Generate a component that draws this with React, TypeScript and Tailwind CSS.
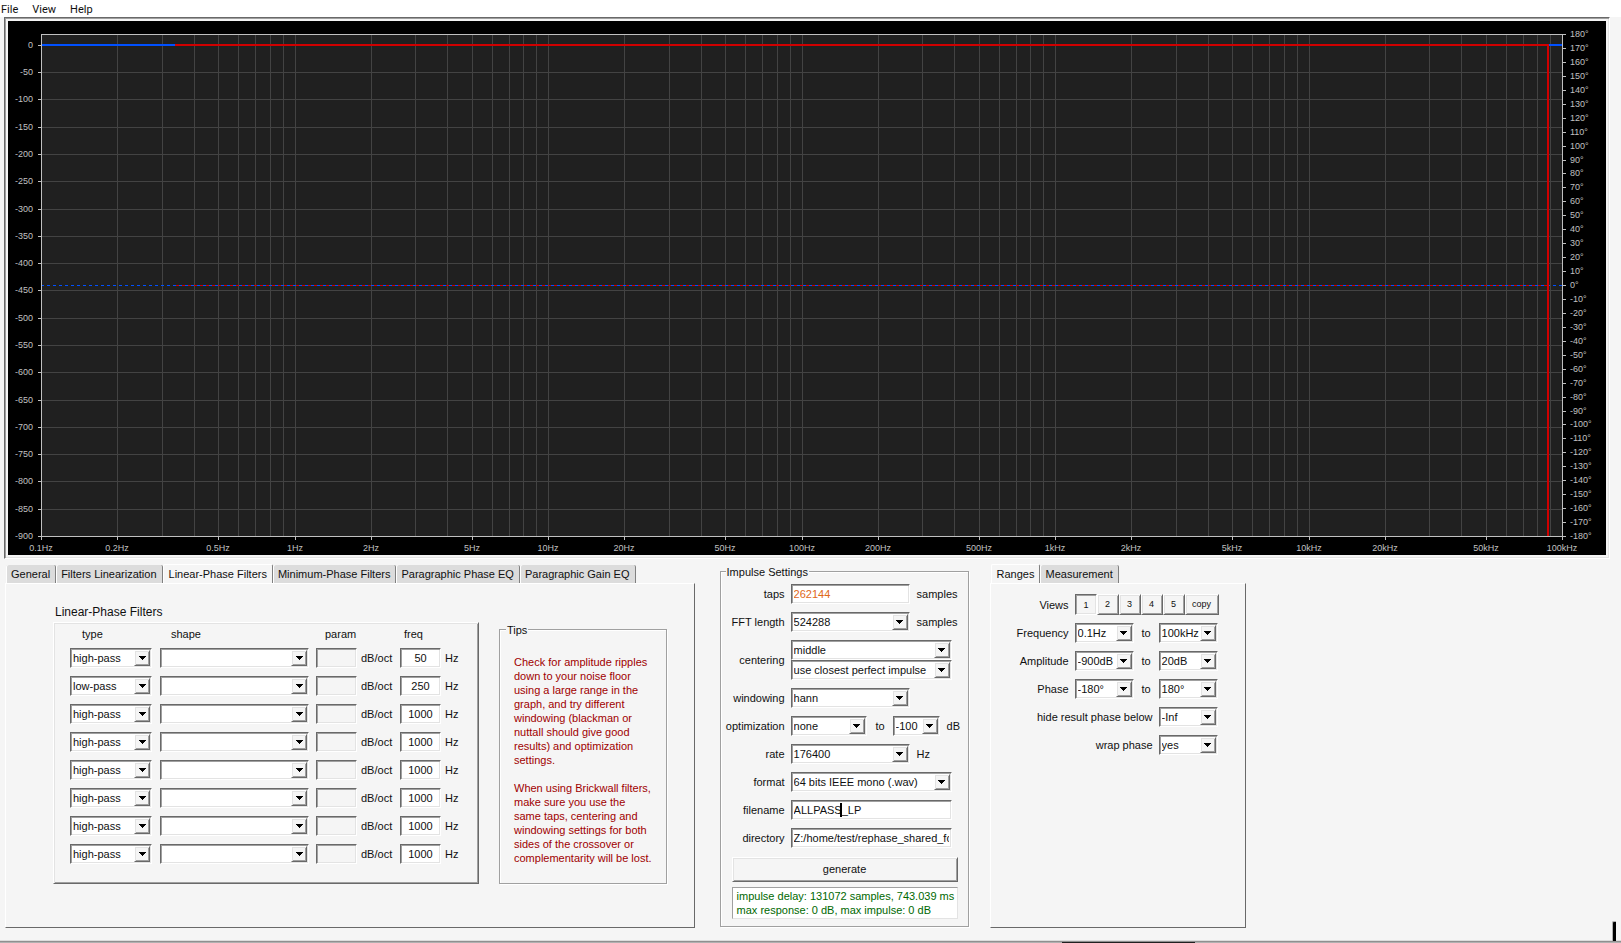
import React, { useState } from "react";

const SUNKEN =
  "border border-t-[#696969] border-l-[#696969] border-r-white border-b-white shadow-[inset_1px_1px_0_#a0a0a0,inset_-1px_-1px_0_#e3e3e3]";
const RAISED =
  "border border-t-white border-l-white border-r-[#696969] border-b-[#696969] shadow-[inset_1px_1px_0_#e3e3e3,inset_-1px_-1px_0_#a0a0a0]";
const GROOVE =
  "border border-[#a0a0a0] shadow-[inset_1px_1px_0_#ffffff,1px_1px_0_#ffffff]";

/* ---------- Response chart ---------- */

const LEFT = 33;
const TOP = 13;
const PLOT_W = 1521;
const PLOT_H = 502;
const RIGHT = LEFT + PLOT_W;
const BOTTOM = TOP + PLOT_H;

const freqX = (hz: number) =>
  Math.round(LEFT + (Math.log10(hz / 0.1) * PLOT_W) / 6);
const gainY = (db: number) => Math.round(TOP + ((20 - db) * PLOT_H) / 920);
const phaseY = (deg: number) => Math.round(TOP + ((180 - deg) * PLOT_H) / 360);

const gains = Array.from({ length: 19 }, (_, i) => -50 * i);
const phases = Array.from({ length: 37 }, (_, i) => 180 - 10 * i);
const gridFreqs = Array.from({ length: 6 }, (_, d) =>
  Array.from({ length: 9 }, (_, m) => (m + 1) * Math.pow(10, d - 1)),
).flat();
const freqTicks: [number, string][] = [
  [0.1, "0.1Hz"],
  [0.2, "0.2Hz"],
  [0.5, "0.5Hz"],
  [1, "1Hz"],
  [2, "2Hz"],
  [5, "5Hz"],
  [10, "10Hz"],
  [20, "20Hz"],
  [50, "50Hz"],
  [100, "100Hz"],
  [200, "200Hz"],
  [500, "500Hz"],
  [1000, "1kHz"],
  [2000, "2kHz"],
  [5000, "5kHz"],
  [10000, "10kHz"],
  [20000, "20kHz"],
  [50000, "50kHz"],
  [100000, "100kHz"],
];

function ResponseChart() {
  const zero = gainY(0);
  const mid = phaseY(0);
  return (
    <svg
      viewBox="0 0 1598 534"
      className="block w-full bg-black text-[9px]"
      role="img"
      aria-label="Amplitude and phase response"
    >
      <g shapeRendering="crispEdges">
        <rect x={LEFT} y={TOP} width={PLOT_W} height={PLOT_H} fill="#202020" />
        <g fill="#434343">
          {gridFreqs.map((f) => (
            <rect key={f} x={freqX(f)} y={TOP} width={1} height={PLOT_H} />
          ))}
          {gains.map((g) => (
            <rect key={g} x={LEFT} y={gainY(g)} width={PLOT_W} height={1} />
          ))}
        </g>
        <path
          d={`M${LEFT} ${mid + 0.5}H${RIGHT}`}
          stroke="#0050ff"
          strokeDasharray="3 3"
        />
        <path
          d={`M168 ${mid + 0.5}H1540`}
          stroke="#d00000"
          strokeDasharray="3 3"
        />
        <rect x={LEFT} y={zero - 1} width={134} height={2} fill="#0050ff" />
        <rect x={1540} y={zero - 1} width={14} height={2} fill="#0050ff" />
        <rect x={167} y={zero - 1} width={1374} height={2} fill="#d00000" />
        <rect
          x={1539}
          y={zero - 1}
          width={2}
          height={BOTTOM - zero + 1}
          fill="#d00000"
        />
        <g fill="#c0c0c0">
          <rect x={LEFT} y={TOP} width={PLOT_W} height={1} />
          <rect x={LEFT} y={BOTTOM} width={PLOT_W} height={1} />
          <rect x={LEFT} y={TOP} width={1} height={PLOT_H} />
          <rect x={RIGHT} y={TOP} width={1} height={PLOT_H} />
          {gains.map((g) => (
            <rect key={g} x={LEFT - 3} y={gainY(g)} width={3} height={1} />
          ))}
          {phases.map((p) => (
            <rect key={p} x={RIGHT} y={phaseY(p)} width={4} height={1} />
          ))}
          {freqTicks.map(([f]) => (
            <rect key={f} x={freqX(f)} y={BOTTOM} width={1} height={4} />
          ))}
        </g>
      </g>
      <g fill="#c0c0c0">
        {gains.map((g) => (
          <text key={g} x={LEFT - 8} y={gainY(g) + 3} textAnchor="end">
            {g}
          </text>
        ))}
        {phases.map((p) => (
          <text key={p} x={RIGHT + 8} y={phaseY(p) + 3}>
            {p}°
          </text>
        ))}
        {freqTicks.map(([f, label]) => (
          <text key={f} x={freqX(f)} y={BOTTOM + 15} textAnchor="middle">
            {label}
          </text>
        ))}
      </g>
    </svg>
  );
}

/* ---------- Controls ---------- */

function Combo({
  id,
  label,
  value,
  options = [],
  className,
}: {
  id?: string;
  label?: string;
  value: string;
  options?: string[];
  className: string;
}) {
  return (
    <span className={`relative block h-5 bg-white ${SUNKEN} ${className}`}>
      <select
        id={id}
        aria-label={label}
        defaultValue={value}
        className="block h-full w-full appearance-none bg-transparent pr-[18px] pl-[2px] outline-none"
      >
        {[value, ...options.filter((o) => o !== value)].map((o) => (
          <option key={o} value={o}>
            {o}
          </option>
        ))}
      </select>
      <span
        className={`pointer-events-none absolute top-px right-px flex h-4 w-4 items-center justify-center bg-[#f5f5f5] ${RAISED}`}
      >
        <svg
          width="7"
          height="4"
          viewBox="0 0 7 4"
          shapeRendering="crispEdges"
          aria-hidden="true"
        >
          <path d="M0 0h7v1h-1v1h-1v1h-1v1h-1v-1h-1v-1h-1v-1h-1z" fill="#000" />
        </svg>
      </span>
    </span>
  );
}

function TextBox({
  id,
  label,
  value,
  className,
}: {
  id?: string;
  label?: string;
  value: string;
  className: string;
}) {
  return (
    <input
      id={id}
      aria-label={label}
      defaultValue={value}
      className={`block h-5 outline-none ${SUNKEN} ${className}`}
    />
  );
}

function Tabs({ names, initial }: { names: string[]; initial: string }) {
  const [active, setActive] = useState(initial);
  return (
    <div role="tablist" className="flex h-[19px] items-end pl-px">
      {names.map((name) => (
        <button
          key={name}
          role="tab"
          aria-selected={name === active}
          onClick={() => setActive(name)}
          className={
            name === active
              ? "h-[19px] rounded-t-[2px] border-t border-r border-l border-t-white border-r-[#808080] border-l-white bg-[#f5f5f5] px-[5px]"
              : "h-[18px] rounded-t-[2px] border-r border-[#808080] bg-[#dcdcdc] px-[5px] shadow-[inset_1px_0_0_#ffffff]"
          }
        >
          {name}
        </button>
      ))}
    </div>
  );
}

const PANEL =
  "border border-t-white border-l-white border-r-[#696969] border-b-[#696969]";

/* ---------- Linear-phase filters ---------- */

const filters = [
  { type: "high-pass", freq: "50" },
  { type: "low-pass", freq: "250" },
  { type: "high-pass", freq: "1000" },
  { type: "high-pass", freq: "1000" },
  { type: "high-pass", freq: "1000" },
  { type: "high-pass", freq: "1000" },
  { type: "high-pass", freq: "1000" },
  { type: "high-pass", freq: "1000" },
];

const FILTER_GRID =
  "grid grid-cols-[90px_156px_45px_39px_45px_33px] items-center";

function FilterPanel() {
  return (
    <section>
      <Tabs
        names={[
          "General",
          "Filters Linearization",
          "Linear-Phase Filters",
          "Minimum-Phase Filters",
          "Paragraphic Phase EQ",
          "Paragraphic Gain EQ",
        ]}
        initial="Linear-Phase Filters"
      />
      <div
        role="tabpanel"
        className={`flex gap-5 pt-5 pr-[27px] pb-[43px] pl-[47px] ${PANEL}`}
      >
        <div>
          <h2 className="mb-[2px] pl-[2px] text-[12px] leading-4">
            Linear-Phase Filters
          </h2>
          <div className={`pt-1 pb-[19px] pl-4 ${RAISED}`}>
            <div className={`mb-[7px] ${FILTER_GRID}`}>
              <span className="pl-3">type</span>
              <span className="pl-[11px]">shape</span>
              <span className="pl-[9px]">param</span>
              <span />
              <span className="pl-1">freq</span>
            </div>
            <div className="flex flex-col gap-2">
              {filters.map((f, i) => (
                <div key={i} className={FILTER_GRID}>
                  <Combo
                    label={`Filter ${i + 1} type`}
                    value={f.type}
                    options={["high-pass", "low-pass"]}
                    className="w-[82px]"
                  />
                  <Combo
                    label={`Filter ${i + 1} shape`}
                    value=""
                    className="w-[149px]"
                  />
                  <TextBox
                    label={`Filter ${i + 1} slope`}
                    value=""
                    className="w-[41px] bg-[#f5f5f5] px-[2px]"
                  />
                  <span>dB/oct</span>
                  <TextBox
                    label={`Filter ${i + 1} frequency`}
                    value={f.freq}
                    className="w-[41px] bg-white text-center"
                  />
                  <span>Hz</span>
                </div>
              ))}
            </div>
          </div>
        </div>
        <fieldset
          className={`mt-[18px] w-[167px] px-[14px] text-[#a00000] ${GROOVE}`}
        >
          <legend className="-ml-2 bg-[#f5f5f5] px-px pt-px text-[#101010]">
            Tips
          </legend>
          <p className="mt-[18px] whitespace-pre">
            {`Check for amplitude ripples
down to your noise floor
using a large range in the
graph, and try different
windowing (blackman or
nuttall should give good
results) and optimization
settings.`}
          </p>
          <p className="mt-[14px] whitespace-pre">
            {`When using Brickwall filters,
make sure you use the
same taps, centering and
windowing settings for both
sides of the crossover or
complementarity will be lost.`}
          </p>
        </fieldset>
      </div>
    </section>
  );
}

/* ---------- Impulse settings ---------- */

function Setting({
  id,
  label,
  children,
}: {
  id: string;
  label: string;
  children: React.ReactNode;
}) {
  return (
    <div className="flex items-center gap-[6px]">
      <label htmlFor={id} className="w-16 shrink-0 text-right">
        {label}
      </label>
      <div className="flex items-center">{children}</div>
    </div>
  );
}

function ImpulseSettings() {
  return (
    <fieldset className={`ml-[25px] w-[249px] self-start ${GROOVE}`}>
      <legend className="ml-[5px] bg-[#f5f5f5] px-px pt-px">
        Impulse Settings
      </legend>
      <div className="flex flex-col gap-2 pt-[5px]">
        <Setting id="taps" label="taps">
          <TextBox
            id="taps"
            value="262144"
            className="w-[119px] bg-white px-[2px] text-[#e06818]"
          />
          <span className="ml-[7px]">samples</span>
        </Setting>
        <Setting id="fft" label="FFT length">
          <Combo id="fft" value="524288" className="w-[119px]" />
          <span className="ml-[7px]">samples</span>
        </Setting>
        <Setting id="centering" label="centering">
          <div>
            <Combo id="centering" value="middle" className="w-[161px]" />
            <Combo
              label="centering precision"
              value="use closest perfect impulse"
              className="w-[161px]"
            />
          </div>
        </Setting>
        <Setting id="windowing" label="windowing">
          <Combo id="windowing" value="hann" className="w-[119px]" />
        </Setting>
        <Setting id="optimization" label="optimization">
          <Combo id="optimization" value="none" className="w-[76px]" />
          <span className="ml-[9px] w-[17px]">to</span>
          <Combo
            label="optimization floor"
            value="-100"
            className="w-[47px]"
          />
          <span className="ml-[7px]">dB</span>
        </Setting>
        <Setting id="rate" label="rate">
          <Combo id="rate" value="176400" className="w-[119px]" />
          <span className="ml-[7px]">Hz</span>
        </Setting>
        <Setting id="format" label="format">
          <Combo
            id="format"
            value="64 bits IEEE mono (.wav)"
            className="w-[161px]"
          />
        </Setting>
        <Setting id="filename" label="filename">
          <div className="relative">
            <TextBox
              id="filename"
              value="ALLPASS_LP"
              className="w-[161px] bg-white px-[2px]"
            />
            <span className="absolute top-[3px] left-[49px] h-[14px] w-[2px] bg-black" />
          </div>
        </Setting>
        <Setting id="directory" label="directory">
          <TextBox
            id="directory"
            value="Z:/home/test/rephase_shared_folder"
            className="w-[161px] bg-white px-[2px]"
          />
        </Setting>
      </div>
      <div className="mt-[9px] mr-[10px] mb-[7px] ml-[11px] flex flex-col gap-[5px]">
        <button className={`h-[25px] pb-[2px] ${RAISED}`}>generate</button>
        <output className="block h-8 border border-t-[#a0a0a0] border-r-[#e3e3e3] border-b-[#e3e3e3] border-l-[#a0a0a0] bg-white pt-px pl-1 whitespace-pre text-[#006800]">
          {`impulse delay: 131072 samples, 743.039 ms
max response: 0 dB, max impulse: 0 dB`}
        </output>
      </div>
    </fieldset>
  );
}

/* ---------- Ranges ---------- */

function RangePair({
  id,
  label,
  from,
  to,
}: {
  id: string;
  label: string;
  from: string;
  to: string;
}) {
  return (
    <div className="flex items-center">
      <label htmlFor={id} className="mr-[6px] w-[78px] text-right">
        {label}
      </label>
      <Combo id={id} value={from} className="w-[59px]" />
      <span className="ml-2 w-[17px]">to</span>
      <Combo label={`${label} upper limit`} value={to} className="w-[59px]" />
    </div>
  );
}

function RangeSingle({
  id,
  label,
  value,
}: {
  id: string;
  label: string;
  value: string;
}) {
  return (
    <div className="flex items-center">
      <label htmlFor={id} className="mr-[6px] w-[162px] text-right">
        {label}
      </label>
      <Combo id={id} value={value} className="w-[59px]" />
    </div>
  );
}

function RangesPanel() {
  const [view, setView] = useState(1);
  return (
    <section className="ml-[21px] flex flex-col">
      <Tabs names={["Ranges", "Measurement"]} initial="Ranges" />
      <div
        role="tabpanel"
        className={`flex grow flex-col gap-2 pt-[10px] pr-[26px] ${PANEL}`}
      >
        <div className="flex items-center">
          <span className="mr-[6px] w-[78px] text-right">Views</span>
          {[1, 2, 3, 4, 5].map((n) => (
            <button
              key={n}
              aria-pressed={n === view}
              onClick={() => setView(n)}
              className={`h-[21px] w-[22px] text-[9px] ${n === view ? `pl-px ${SUNKEN}` : `pb-[2px] ${RAISED}`}`}
            >
              {n}
            </button>
          ))}
          <button className={`h-[21px] w-[34px] pb-[2px] text-[9px] ${RAISED}`}>
            copy
          </button>
        </div>
        <RangePair id="frequency" label="Frequency" from="0.1Hz" to="100kHz" />
        <RangePair id="amplitude" label="Amplitude" from="-900dB" to="20dB" />
        <RangePair id="phase" label="Phase" from="-180°" to="180°" />
        <RangeSingle id="hide" label="hide result phase below" value="-Inf" />
        <RangeSingle id="wrap" label="wrap phase" value="yes" />
      </div>
    </section>
  );
}

/* ---------- Window ---------- */

export default function App() {
  return (
    <div className="flex min-h-screen flex-col bg-[#f5f5f5] font-['Liberation_Sans',Arial,sans-serif] text-[11px] leading-[14px] text-[#101010]">
      <nav className="flex h-[17px] items-center gap-[14px] bg-white pt-[2px] pl-px font-[Roboto,sans-serif]">
        <button>File</button>
        <button>View</button>
        <button>Help</button>
      </nav>
      <div className={`mr-[11px] ml-1 p-[3px] ${SUNKEN}`}>
        <ResponseChart />
      </div>
      <main className="flex grow items-stretch pt-[5px] pb-3 pl-[5px]">
        <FilterPanel />
        <ImpulseSettings />
        <RangesPanel />
      </main>
      <footer className="relative h-[3px] border-t border-[#dcdcdc] bg-[#b0b0b0]">
        <div className="h-px bg-[#8f8f8f]" />
        <span className="absolute bottom-0 left-[65%] ml-2 h-px w-[133px] bg-[#202020]" />
        <span className="absolute right-[5px] bottom-[2px] h-[20px] w-[4px] rounded-tl-[2px] border-t border-l border-[#b0b0b0] bg-black" />
      </footer>
    </div>
  );
}
